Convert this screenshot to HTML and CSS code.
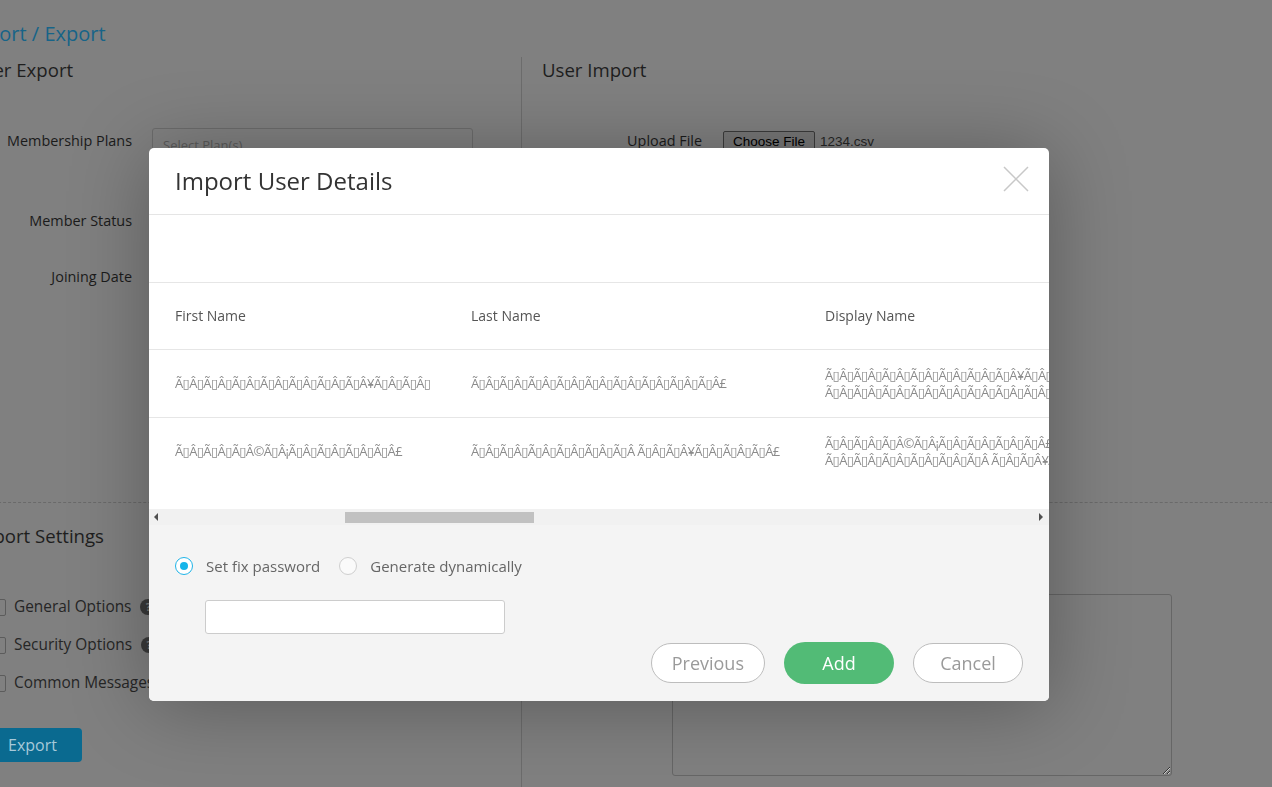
FILE: index.html
```html
<!DOCTYPE html>
<html lang="en">
<head>
<meta charset="utf-8">
<title>Import / Export</title>
<link rel="stylesheet" href="styles.css">
</head>
<body>
<div class="page">
  <h1 class="page-title">Import / Export</h1>
  <div class="top">
    <section class="col-left">
      <h2 class="section-title">User Export</h2>
      <div class="form-row">
        <div class="form-label">Membership Plans</div>
        <div class="select-box tall">Select Plan(s)</div>
      </div>
      <div class="form-row">
        <div class="form-label">Member Status</div>
        <div class="select-box">All</div>
      </div>
      <div class="form-row">
        <div class="form-label">Joining Date</div>
        <div class="select-box">All</div>
      </div>
    </section>
    <section class="col-right">
      <h2 class="section-title">User Import</h2>
      <div class="form-row">
        <div class="form-label wide">Upload File</div>
        <div class="file-input"><span class="file-btn">Choose File</span><span class="file-name">1234.csv</span></div>
      </div>
    </section>
  </div>
  <div class="bottom">
    <section class="col-left">
      <h2 class="section-title">Import Settings</h2>
      <ul class="options">
        <li class="option"><span class="checkbox"></span><span class="option-label">General Options</span><span class="help">?</span></li>
        <li class="option"><span class="checkbox"></span><span class="option-label">Security Options</span><span class="help">?</span></li>
        <li class="option"><span class="checkbox"></span><span class="option-label">Common Messages</span><span class="help">?</span></li>
      </ul>
      <button class="export-btn">Export</button>
    </section>
    <section class="col-right msg-col">
      <div class="form-row">
        <div class="form-label msg-label">Message</div>
        <textarea class="message"></textarea>
      </div>
    </section>
  </div>
</div>

<div class="overlay">
  <div class="modal">
    <div class="modal-header">
      <h3 class="modal-title">Import User Details</h3>
      <span class="close">
        <svg width="26" height="26" viewBox="0 0 26 26"><path d="M1 1 L25 25 M25 1 L1 25" stroke="#c8c8c8" stroke-width="1.5" fill="none"/></svg>
      </span>
    </div>
    <div class="table-wrap">
      <table class="users">
        <colgroup>
          <col class="c1"><col class="c2"><col class="c3"><col class="c4"><col class="c5">
        </colgroup>
        <thead>
          <tr><th>First Name</th><th>Last Name</th><th>Display Name</th><th>Email</th><th>Password</th></tr>
        </thead>
        <tbody>
          <tr>
            <td>Ã▯Â▯Ã▯Â▯Ã▯Â▯Ã▯Â▯Ã▯Â▯Ã▯Â▯Ã▯Â¥Ã▯Â▯Ã▯Â▯</td>
            <td>Ã▯Â▯Ã▯Â▯Ã▯Â▯Ã▯Â▯Ã▯Â▯Ã▯Â▯Ã▯Â▯Ã▯Â▯Ã▯Â£</td>
            <td>Ã▯Â▯Ã▯Â▯Ã▯Â▯Ã▯Â▯Ã▯Â▯Ã▯Â▯Ã▯Â¥Ã▯Â▯Ã▯Â▯ Ã▯Â▯Ã▯Â▯Ã▯Â▯Ã▯Â▯Ã▯Â▯Ã▯Â▯Ã▯Â▯Ã▯Â▯Ã▯Â£</td>
            <td></td><td></td>
          </tr>
          <tr class="last">
            <td>Ã▯Â▯Ã▯Â▯Ã▯Â©Ã▯Â¡Ã▯Â▯Ã▯Â▯Ã▯Â▯Ã▯Â£</td>
            <td>Ã▯Â▯Ã▯Â▯Ã▯Â▯Ã▯Â▯Ã▯Â▯Ã▯Â&nbsp;Ã▯Â▯Ã▯Â¥Ã▯Â▯Ã▯Â▯Ã▯Â£</td>
            <td>Ã▯Â▯Ã▯Â▯Ã▯Â©Ã▯Â¡Ã▯Â▯Ã▯Â▯Ã▯Â▯Ã▯Â£ Ã▯Â▯Ã▯Â▯Ã▯Â▯Ã▯Â▯Ã▯Â▯Ã▯Â&nbsp;Ã▯Â▯Ã▯Â¥Ã▯Â▯Ã▯Â▯Ã▯Â£</td>
            <td></td><td></td>
          </tr>
        </tbody>
      </table>
    </div>
    <div class="hscroll">
      <span class="arrow arrow-left"></span>
      <div class="track"><div class="thumb"></div></div>
      <span class="arrow arrow-right"></span>
    </div>
    <div class="modal-footer">
      <div class="pw-options">
        <span class="radio checked"></span><span class="radio-label">Set fix password</span>
        <span class="radio second"></span><span class="radio-label">Generate dynamically</span>
      </div>
      <input class="pw-input" type="text">
      <div class="actions">
        <button class="btn btn-outline">Previous</button>
        <button class="btn btn-add">Add</button>
        <button class="btn btn-outline">Cancel</button>
      </div>
    </div>
  </div>
</div>
</body>
</html>
```

FILE: styles.css
```css
* { box-sizing: border-box; }
html, body { margin: 0; height: 100%; }
body {
  background: #808080;
  font-family: "Open Sans", "DejaVu Sans", sans-serif;
  overflow: hidden;
}

.page { margin-left: -37px; padding-top: 20px; width: 1400px; }
.page-title { margin: 0; font-size: 20px; line-height: 27px; font-weight: 400; color: #176488; }
.top { display: flex; margin-top: 10px; height: 445px; }
.col-left { width: 546px; margin-left: 12px; flex: none; }
.col-right { flex: 1; border-left: 1px solid #6c6c6c; padding-left: 20px; }
.section-title { margin: 0 0 46px; font-size: 18.6px; line-height: 25px; font-weight: 400; color: #1e1e1e; }
.col-left .section-title { margin-left: -4px; }
.form-row { display: flex; align-items: flex-start; gap: 20px; margin-bottom: 20px; }
.form-label { width: 157px; flex: none; text-align: right; padding-top: 3px; font-size: 14.4px; line-height: 20px; color: #1b1b1b; }
.form-label.wide { width: 160px; margin-right: 1px; }
.select-box {
  width: 321px; height: 36px; border: 1px solid #6c6c6c; border-radius: 3px;
  padding: 6px 10px; font-size: 13px; line-height: 20px; color: #5a5a5a;
}
.select-box.tall { height: 60px; }
.file-input { display: flex; align-items: center; margin-top: 3px; font-family: "Liberation Sans", Arial, sans-serif; font-size: 13.5px; }
.file-btn {
  background: #777777; border: 1px solid #3c3c3c; border-radius: 2px; color: #000;
  padding: 1px 9px; line-height: 17px;
}
.file-name { margin-left: 5px; color: #262626; }

.bottom { display: flex; border-top: 1px dashed #6a6a6a; height: 290px; }
.bottom .col-left { padding-top: 20px; }
.bottom .section-title { margin-bottom: 48px; }
.options { list-style: none; margin: 0; padding: 0 0 0 15px; }
.option { display: flex; align-items: center; height: 22px; margin-bottom: 16px; }
.checkbox { width: 16px; height: 17px; border: 1px solid #5c5c5c; border-radius: 2px; flex: none; }
.option-label { margin-left: 8px; font-size: 15.4px; line-height: 22px; color: #262626; white-space: nowrap; }
.help {
  width: 16px; height: 16px; border-radius: 50%; background: #3a3a3a; color: #808080;
  margin-left: 9px; font-size: 11px; line-height: 16px; text-align: center; font-weight: 700; flex: none;
}
.export-btn {
  margin: 18px 0 0 8px; height: 34px; padding: 0 25px; border: 0; border-radius: 4px;
  background: #0a6a90; color: #a7c9d9; font-family: "Open Sans", sans-serif; font-size: 16px; line-height: 34px;
}
.msg-col { padding-top: 91px; }
.form-label.msg-label { width: 110px; }
.message { width: 500px; height: 182px; border: 1px solid #666; border-radius: 3px; background: transparent; resize: both; }

/* modal */
.overlay {
  position: fixed; inset: 0; display: flex; align-items: flex-start;
  padding: 148px 0 0 149px;
}
.modal {
  width: 900px; background: #fff; border-radius: 5px; overflow: hidden;
  box-shadow: 0 5px 80px rgba(0, 0, 0, 0.3);
}
.modal-header {
  height: 67px; border-bottom: 1px solid #e5e5e5; display: flex; align-items: center;
  justify-content: space-between; padding: 0 20px 0 26px;
}
.modal-title { margin: 0; font-size: 24px; line-height: 33px; font-weight: 400; color: #333; margin-top: -2px; }
.close { display: flex; margin-top: -4px; }

.table-wrap { overflow: hidden; padding: 67px 0 24px; }
.users { border-collapse: separate; border-spacing: 0; table-layout: fixed; width: 1640px; }
.c1 { width: 296px; } .c2 { width: 354px; } .c3 { width: 390px; } .c4 { width: 300px; } .c5 { width: 300px; }
.users th, .users td {
  padding: 0 26px; text-align: left; vertical-align: middle; line-height: 17px; font-weight: 400;
}
.users th { height: 68px; border-top: 1px solid #e6e6e6; border-bottom: 1px solid #e6e6e6; color: #555; font-size: 14px; padding-bottom: 2px; }
.users td { height: 68px; border-bottom: 1px solid #e6e6e6; color: #8a8a8a; font-size: 13px; letter-spacing: -0.6px; }
.users tr.last td { height: 67px; border-bottom: 0; }

.hscroll { display: flex; align-items: center; height: 16px; background: #f1f1f1; }
.arrow { width: 16px; height: 16px; display: flex; align-items: center; justify-content: center; flex: none; }
.arrow::before { content: ""; border-top: 4px solid transparent; border-bottom: 4px solid transparent; }
.arrow-left::before { border-right: 4px solid #505050; margin-right: 2px; }
.arrow-right::before { border-left: 4px solid #505050; margin-left: 0px; }
.track { flex: 1; height: 16px; display: flex; align-items: center; }
.thumb { margin-left: 180px; width: 189px; height: 11px; background: #c1c1c1; }

.modal-footer { background: #f4f4f4; padding: 31px 26px 17px; }
.pw-options { display: flex; align-items: center; height: 20px; }
.radio {
  width: 18px; height: 18px; border-radius: 50%; border: 1px solid #cfcfcf; background: #fafafa;
  flex: none; display: flex; align-items: center; justify-content: center;
}
.radio.checked { border-color: #1fb4e8; background: #fff; }
.radio.checked::after { content: ""; width: 8px; height: 8px; border-radius: 50%; background: #17b5ea; }
.radio.second { margin-left: 19px; }
.radio-label { margin-left: 13px; font-size: 15px; line-height: 20px; color: #666; }
.pw-input {
  display: block; margin: 24px 0 0 30px; width: 300px; height: 34px;
  border: 1px solid #cccccc; border-radius: 3px; background: #fff; outline: none;
}
.actions { display: flex; justify-content: flex-end; align-items: center; gap: 19px; margin-top: 8px; }
.btn {
  min-width: 110px; padding: 0 20px; font-family: "Open Sans", sans-serif; font-size: 18px;
  border-radius: 21px; cursor: pointer;
}
.btn-outline { height: 40px; background: #fff; border: 1px solid #bdbdbd; color: #9a9a9a; }
.btn-add { height: 42px; background: #52bb76; border: 0; color: #fff; }
```
